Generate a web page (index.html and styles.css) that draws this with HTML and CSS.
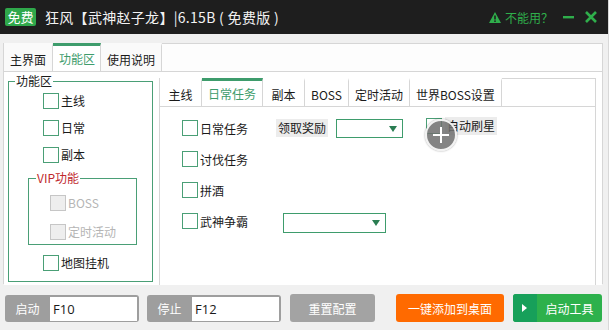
FILE: index.html
```html
<!DOCTYPE html>
<html lang="zh-CN">
<head>
    <meta charset="UTF-8">
    <title>狂风【武神赵子龙】</title>
    <link rel="stylesheet" href="styles.css">
</head>
<body>
    <!-- Title bar -->
    <div class="titlebar">
        <span class="badge">免费</span>
        <span class="title">狂风【武神赵子龙】|6.15B ( 免费版 )</span>
        <span class="spacer"></span>
        <span class="help">
            <svg width="12" height="11" viewBox="0 0 12 11"><path d="M6 0 L12 11 L0 11 Z" fill="#2fae4b"/><rect x="5.2" y="3.5" width="1.6" height="4" fill="#1e1e1e"/><rect x="5.2" y="8.4" width="1.6" height="1.5" fill="#1e1e1e"/></svg>
            不能用？
        </span>
        <span class="win-btn">
            <svg width="12" height="12" viewBox="0 0 12 12"><rect x="0" y="5" width="11" height="2.4" fill="#2fae4b"/></svg>
        </span>
        <span class="win-btn">
            <svg width="12" height="12" viewBox="0 0 12 12"><path d="M1 1 L11 11 M11 1 L1 11" stroke="#2fae4b" stroke-width="2.6"/></svg>
        </span>
    </div>

    <div class="main">
        <div class="frame">
            <div class="tabs">
                <div class="tab">主界面</div>
                <div class="tab active">功能区</div>
                <div class="tab">使用说明</div>
            </div>
            <div class="panel">
                <fieldset class="group">
                    <legend>功能区</legend>
                    <div class="check"><span class="cb"></span>主线</div>
                    <div class="check"><span class="cb"></span>日常</div>
                    <div class="check"><span class="cb"></span>副本</div>
                    <fieldset class="group vip">
                        <legend>VIP功能</legend>
                        <div class="check off"><span class="cb"></span>BOSS</div>
                        <div class="check off"><span class="cb"></span>定时活动</div>
                    </fieldset>
                    <div class="check last"><span class="cb"></span>地图挂机</div>
                </fieldset>

                <div class="sub">
                    <div class="tabs sub-tabs">
                        <div class="tab">主线</div>
                        <div class="tab active">日常任务</div>
                        <div class="tab">副本</div>
                        <div class="tab">BOSS</div>
                        <div class="tab">定时活动</div>
                        <div class="tab">世界BOSS设置</div>
                    </div>
                    <div class="sub-body">
                        <div class="row">
                            <div class="check col1"><span class="cb"></span>日常任务</div>
                            <span class="tag">领取奖励</span>
                            <span class="select small"></span>
                            <div class="check star"><span class="cb"></span><span class="tag">自动刷星</span><span class="cursor"></span></div>
                        </div>
                        <div class="row"><div class="check"><span class="cb"></span>讨伐任务</div></div>
                        <div class="row"><div class="check"><span class="cb"></span>拼酒</div></div>
                        <div class="row">
                            <div class="check col2"><span class="cb"></span>武神争霸</div>
                            <span class="select wide"></span>
                        </div>
                    </div>
                </div>
            </div>
        </div>
    </div>

    <!-- Bottom bar -->
    <div class="footer">
        <div class="hotkey"><span class="hk-label">启动</span><span class="hk-input">F10</span></div>
        <div class="hotkey"><span class="hk-label">停止</span><span class="hk-input">F12</span></div>
        <button class="btn gray">重置配置</button>
        <button class="btn orange">一键添加到桌面</button>
        <button class="btn green"><span class="play"></span><span class="btn-text">启动工具</span></button>
    </div>
</body>
</html>
```

FILE: styles.css
```css
body {
    margin: 0;
    width: 608px;
    height: 330px;
    overflow: hidden;
    background-color: #f0f0f0;
    border-right: 1px solid #d8d8d8;
    font-family: "Noto Sans CJK SC", "Noto Sans", sans-serif;
    font-size: 12px;
    color: #1a1a1a;
}

.titlebar {
    height: 34px;
    background-color: #1e1e1e;
    display: flex;
    align-items: center;
    padding: 0 11px 0 5px;
}

.badge {
    background-color: #2fa84b;
    color: #fff;
    font-size: 13px;
    line-height: 18px;
    width: 31px;
    text-align: center;
    border-radius: 2px;
}

.title {
    color: #f2f2f2;
    font-size: 14px;
    line-height: 20px;
    margin-left: 9px;
    letter-spacing: 0.3px;
}

.spacer {
    flex: 1;
}

.help {
    display: flex;
    align-items: center;
    gap: 4px;
    color: #2fae4b;
    font-size: 12px;
}

.win-btn {
    display: flex;
    margin-left: 10px;
}

.main {
    padding: 9px 5px 0 3px;
}

.frame {
    height: 239px;
    border: 1px solid #d6d6d6;
    background-color: #fdfdfd;
    display: flex;
    flex-direction: column;
}

.tabs {
    display: flex;
    height: 27px;
    border-bottom: 1px solid #d6d6d6;
}

.tab {
    padding: 0 6px;
    line-height: 28px;
    border-right: 1px solid #d6d6d6;
    border-top: 3px solid transparent;
    margin-top: -1px;
    font-size: 12px;
    color: #1a1a1a;
    background-color: #fafafa;
}

.tab.active {
    border-top-color: #3e9c6c;
    color: #3e9c6c;
    background-color: #fff;
    line-height: 26px;
    padding: 0 5px 0 6px;
}

.panel {
    flex: 1;
    display: flex;
    background-color: #fff;
}

.group {
    margin: 1px 0 3px 4px;
    padding: 3px 0 0 34px;
    width: 109px;
    border: 1px solid #4a9f76;
    display: flex;
    flex-direction: column;
    min-width: 0;
}

.group legend {
    padding: 0 1px;
    margin-left: -28px;
    line-height: 16px;
    font-size: 12px;
}

.check {
    display: flex;
    align-items: center;
    height: 17px;
    margin-bottom: 10px;
    font-size: 12px;
    position: relative;
}

.cb {
    width: 14px;
    height: 14px;
    border: 1px solid #4a9f76;
    background-color: #fff;
    margin-right: 2px;
    flex: none;
}

.check.off {
    color: #b5b5b5;
}

.check.off .cb {
    border-color: #c6c6c6;
    background-color: #eeeeee;
}

.vip {
    margin: -3px 0 0 -15px;
    padding: 8px 0 4px 21px;
    width: 86px;
    border-color: #4a9f76;
}

.vip legend {
    color: #c0282d;
    margin-left: -14px;
}

.vip .check {
    margin-bottom: 12px;
}

.vip .check:last-child {
    margin-bottom: 0;
}

.check.last {
    margin-top: 9px;
}

.sub {
    flex: 1;
    margin: 6px 6px 0 6px;
    border: 1px solid #d6d6d6;
    border-bottom: none;
    display: flex;
    flex-direction: column;
}

.sub-tabs .tab {
    min-width: 29px;
    text-align: center;
    padding: 0 6px;
    background-color: #fff;
}

.sub-body {
    padding: 11px 0 0 22px;
}

.row {
    display: flex;
    align-items: center;
    height: 20px;
    margin-bottom: 11px;
}

.row .check {
    margin-bottom: 0;
}

.col1 {
    width: 94px;
}

.col2 {
    width: 101px;
}

.tag {
    background-color: #ececec;
    line-height: 18px;
    padding: 0 2px;
}

.select {
    height: 17px;
    border: 1px solid #3e9c6c;
    background-color: #fff;
    position: relative;
    margin-left: 8px;
}

.select::after {
    content: "";
    position: absolute;
    right: 5px;
    top: 6px;
    border-left: 4px solid transparent;
    border-right: 4px solid transparent;
    border-top: 6px solid #2a7d52;
}

.select.small {
    width: 65px;
}

.select.wide {
    width: 101px;
    height: 18px;
    margin-left: 0;
    margin-top: 3px;
}

.star {
    margin-left: 23px;
    margin-top: -5px;
}

.star .tag {
    margin-left: 1px;
}

.cursor {
    position: absolute;
    left: -1px;
    top: 2px;
    width: 28px;
    height: 28px;
    border-radius: 50%;
    border: 2px solid rgba(255, 255, 255, 0.9);
    background-color: rgba(110, 110, 110, 0.85);
    box-shadow: 0 0 2px rgba(0, 0, 0, 0.4);
}

.cursor::before,
.cursor::after {
    content: "";
    position: absolute;
    background-color: #fff;
}

.cursor::before {
    left: 6px;
    top: 13px;
    width: 16px;
    height: 2px;
}

.cursor::after {
    left: 13px;
    top: 6px;
    width: 2px;
    height: 16px;
}

.footer {
    display: flex;
    align-items: center;
    padding: 10px 0 0 5px;
}

.hotkey {
    width: 132px;
    height: 24px;
    padding: 2px 2px 1px 0;
    background-color: #9e9e9e;
    border-radius: 3px;
    display: flex;
    margin-right: 8px;
}

.hk-label {
    width: 45px;
    text-align: center;
    color: #fff;
    line-height: 24px;
}

.hk-input {
    flex: 1;
    background-color: #fff;
    line-height: 24px;
    padding-left: 3px;
    font-family: "Open Sans", sans-serif;
    font-size: 13px;
}

.btn {
    height: 28px;
    border: none;
    border-radius: 3px;
    color: #fff;
    font-family: "Noto Sans CJK SC", sans-serif;
    font-size: 12px;
    padding: 0;
    cursor: pointer;
}

.btn.gray {
    width: 85px;
    background-color: #a3a3a3;
    margin-left: 1px;
}

.btn.orange {
    width: 108px;
    background-color: #ff6a00;
    margin-left: 21px;
}

.btn.green {
    width: 89px;
    background-color: #2db14c;
    margin-left: 9px;
    display: flex;
    align-items: center;
    overflow: hidden;
}

.play {
    width: 24px;
    height: 28px;
    background-color: #17a05a;
    position: relative;
}

.play::after {
    content: "";
    position: absolute;
    left: 9px;
    top: 10px;
    border-top: 4px solid transparent;
    border-bottom: 4px solid transparent;
    border-left: 5px solid #fff;
}

.btn-text {
    flex: 1;
    text-align: center;
}
```
